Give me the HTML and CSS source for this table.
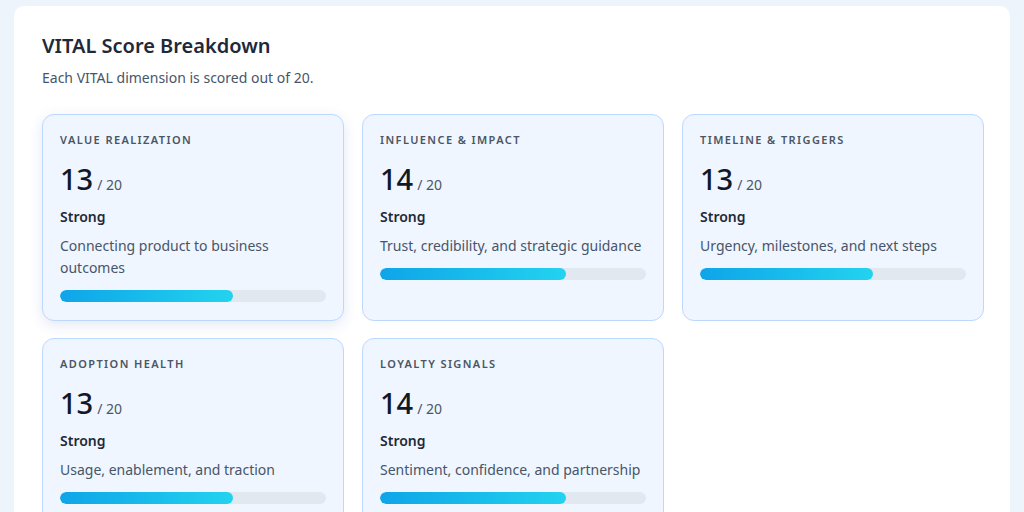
FILE: index.html
```html
<!DOCTYPE html>
<html lang="en">
<head>
<meta charset="utf-8">
<title>VITAL Score Breakdown</title>
<link rel="stylesheet" href="styles.css">
</head>
<body>
<main class="page">
  <section class="panel">
    <h2 class="panel-title">VITAL Score Breakdown</h2>
    <p class="panel-sub">Each VITAL dimension is scored out of 20.</p>
    <div class="grid">
      <div class="card card-active">
        <div class="label">VALUE REALIZATION</div>
        <div class="score"><span class="num">13</span><span class="den">/ 20</span></div>
        <div class="rating">Strong</div>
        <div class="desc">Connecting product to business outcomes</div>
        <div class="track"><div class="fill" style="width:65%"></div></div>
      </div>
      <div class="card">
        <div class="label">INFLUENCE &amp; IMPACT</div>
        <div class="score"><span class="num">14</span><span class="den">/ 20</span></div>
        <div class="rating">Strong</div>
        <div class="desc">Trust, credibility, and strategic guidance</div>
        <div class="track"><div class="fill" style="width:70%"></div></div>
      </div>
      <div class="card">
        <div class="label">TIMELINE &amp; TRIGGERS</div>
        <div class="score"><span class="num">13</span><span class="den">/ 20</span></div>
        <div class="rating">Strong</div>
        <div class="desc">Urgency, milestones, and next steps</div>
        <div class="track"><div class="fill" style="width:65%"></div></div>
      </div>
      <div class="card">
        <div class="label">ADOPTION HEALTH</div>
        <div class="score"><span class="num">13</span><span class="den">/ 20</span></div>
        <div class="rating">Strong</div>
        <div class="desc">Usage, enablement, and traction</div>
        <div class="track"><div class="fill" style="width:65%"></div></div>
      </div>
      <div class="card">
        <div class="label">LOYALTY SIGNALS</div>
        <div class="score"><span class="num">14</span><span class="den">/ 20</span></div>
        <div class="rating">Strong</div>
        <div class="desc">Sentiment, confidence, and partnership</div>
        <div class="track"><div class="fill" style="width:70%"></div></div>
      </div>
    </div>
  </section>
</main>
</body>
</html>
```

FILE: styles.css
```css
* { box-sizing: border-box; }
html, body { margin: 0; padding: 0; }
body {
  background: #eef4fc;
  font-family: "Noto Sans", "Open Sans", sans-serif;
  color: #1e293b;
  height: 512px;
  overflow: hidden;
}
.page {
  padding: 6px 14px 0 14px;
}
.panel {
  background: #ffffff;
  border-radius: 10px;
  padding: 27px 26px 40px 28px;
}
.panel-title {
  margin: 0;
  font-size: 20px;
  font-weight: 600;
  line-height: 26px;
  color: #1e293b;
}
.panel-sub {
  margin: 9px 0 0 0;
  font-size: 14px;
  line-height: 20px;
  color: #475569;
}
.grid {
  margin-top: 26px;
  display: grid;
  grid-template-columns: repeat(3, 1fr);
  gap: 17px 18px;
}
.card {
  background: #eff6ff;
  border: 1.5px solid #bcd8fd;
  border-radius: 12px;
  padding: 16px 17px 18px 17px;
}
.card-active {
  box-shadow: 0 4px 14px rgba(30, 64, 175, 0.12);
}
.label {
  font-size: 11px;
  font-weight: 600;
  letter-spacing: 1.4px;
  color: #4b5563;
  line-height: 18px;
}
.score {
  margin-top: 12px;
  display: flex;
  align-items: baseline;
  gap: 4px;
  line-height: 36px;
}
.num {
  font-size: 29px;
  font-weight: 500;
  color: #111827;
}
.den {
  font-size: 14px;
  color: #4b5563;
}
.rating {
  margin-top: 3px;
  font-size: 14px;
  font-weight: 600;
  color: #1f2937;
  line-height: 22px;
}
.desc {
  margin-top: 7px;
  font-size: 14px;
  line-height: 22px;
  color: #475569;
}
.track {
  margin-top: 11px;
  height: 12px;
  border-radius: 6px;
  background: #e2e8f0;
  overflow: hidden;
}
.fill {
  height: 100%;
  border-radius: 6px;
  background: linear-gradient(90deg, #0ea5e9 0%, #22d3ee 100%);
}
```
